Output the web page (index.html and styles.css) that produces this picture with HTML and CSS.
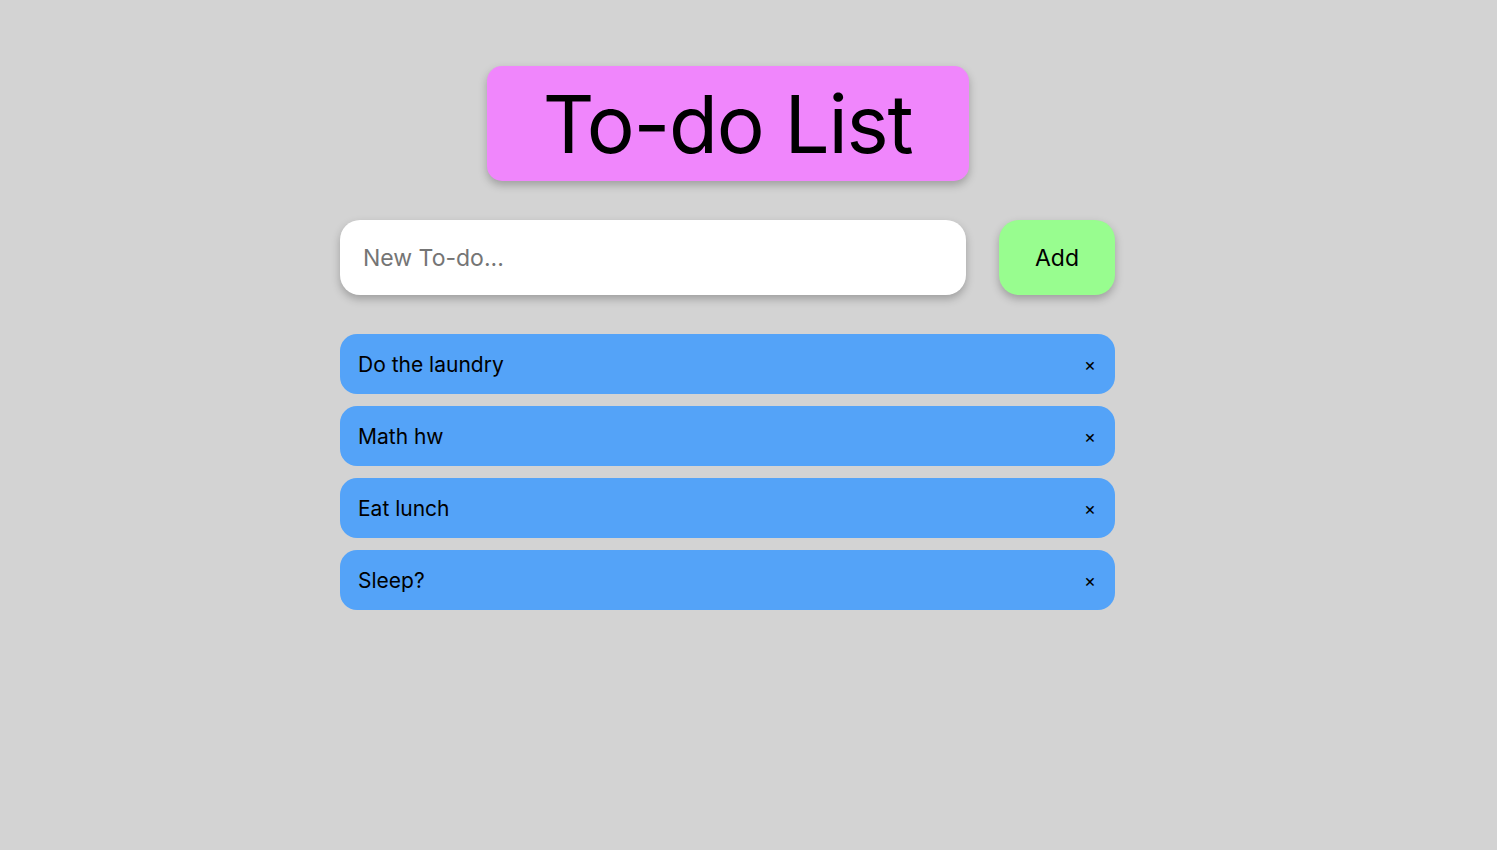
FILE: index.html
```html
<!DOCTYPE html>
<html>
<head>
<meta charset="utf-8">
<link rel="stylesheet" href="styles.css">
</head>
<body>
<div class="page">
  <main class="app">
    <h1 class="title">To-do List</h1>
    <div class="entry">
      <input class="new-input" type="text" placeholder="New To-do...">
      <button class="add-btn">Add</button>
    </div>
    <ul class="list">
      <li class="item"><span>Do the laundry</span><button class="del">×</button></li>
      <li class="item"><span>Math hw</span><button class="del">×</button></li>
      <li class="item"><span>Eat lunch</span><button class="del">×</button></li>
      <li class="item"><span>Sleep?</span><button class="del">×</button></li>
    </ul>
  </main>
</div>
</body>
</html>
```
FILE: styles.css
```css
html, body {
  margin: 0;
  padding: 0;
  background: #d3d3d3;
  font-family: Inter, "Noto Sans", sans-serif;
  height: 100%;
}
.page {
  display: flex;
  justify-content: center;
  padding-right: 42px;
}
.app {
  width: 775px;
  display: flex;
  flex-direction: column;
  align-items: center;
  padding-top: 66px;
}
.title {
  margin: 0;
  width: 482px;
  height: 115px;
  box-sizing: border-box;
  display: flex;
  align-items: center;
  justify-content: center;
  background: #f086fc;
  border-radius: 15px;
  font-size: 80px;
  font-weight: 400;
  letter-spacing: -1.3px;
  color: #000;
  box-shadow: 0 4px 8px rgba(0,0,0,0.25);
}
.entry {
  margin-top: 39px;
  width: 100%;
  display: flex;
  justify-content: space-between;
}
.new-input {
  width: 626px;
  height: 75px;
  box-sizing: border-box;
  border: none;
  outline: none;
  border-radius: 20px;
  background: #fff;
  padding: 0 23px;
  font-family: Inter, "Noto Sans", sans-serif;
  font-size: 23px;
  color: #333;
  box-shadow: 0 4px 8px rgba(0,0,0,0.25);
}
.new-input::placeholder {
  color: #757575;
}
.add-btn {
  width: 116px;
  height: 75px;
  border: none;
  border-radius: 20px;
  background: #98fd8f;
  font-family: Inter, "Noto Sans", sans-serif;
  font-size: 23px;
  color: #000;
  box-shadow: 0 4px 8px rgba(0,0,0,0.25);
}
.list {
  list-style: none;
  margin: 39px 0 0;
  padding: 0;
  width: 100%;
  display: flex;
  flex-direction: column;
  gap: 12px;
}
.item {
  height: 60px;
  box-sizing: border-box;
  background: #54a3f8;
  border-radius: 17px;
  display: flex;
  align-items: center;
  justify-content: space-between;
  padding: 0 18px;
  font-size: 21px;
  color: #000;
}
.item span {
  padding-top: 1px;
}
.del {
  border: none;
  background: none;
  font-family: Inter, "Noto Sans", sans-serif;
  font-size: 18px;
  color: #000;
  padding: 0;
  margin-right: 1px;
}
```
